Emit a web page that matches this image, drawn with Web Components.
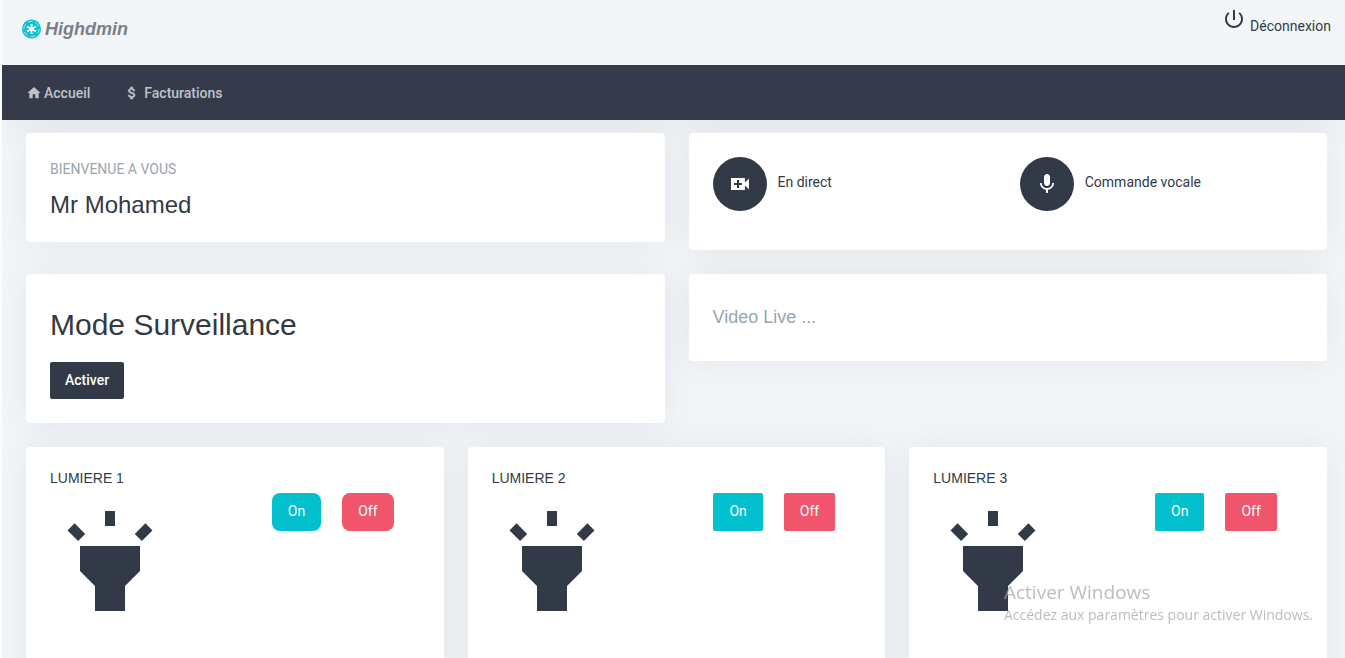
<!DOCTYPE html>
<html lang="fr">
<head>
<meta charset="utf-8">
<meta name="viewport" content="width=device-width, initial-scale=1">
<title>Highdmin</title>
<style>
  body {
    margin: 0;
    border-left: 2px solid #fcfcfc;
    background: #f2f6f9;
    color: #313a46;
    font: 14px/20px Roboto, "Liberation Sans", sans-serif;
    --dark: #313a46;
    --heading: "Liberation Sans", Arial, sans-serif;
    --shadow: 0 0 35px 0 rgba(73, 80, 87, 0.09);
  }
  main {
    display: grid;
    gap: 24px;
    padding: 13px 18px 24px 24px;
  }
</style>
</head>
<body>
<top-bar></top-bar>
<nav-bar>
  <nav-item icon="home">Accueil</nav-item>
  <nav-item icon="dollar" wide>Facturations</nav-item>
</nav-bar>
<main>
  <card-row cols="2">
    <welcome-card name="Mr Mohamed">BIENVENUE A VOUS</welcome-card>
    <action-card>
      <round-action icon="video">En direct</round-action>
      <round-action icon="mic">Commande vocale</round-action>
    </action-card>
  </card-row>
  <card-row cols="2">
    <mode-card>Mode Surveillance</mode-card>
    <video-card>Video Live ...</video-card>
  </card-row>
  <card-row cols="3">
    <light-card rounded>LUMIERE 1</light-card>
    <light-card>LUMIERE 2</light-card>
    <light-card>LUMIERE 3</light-card>
  </card-row>
</main>
<activation-notice></activation-notice>

<script>
/* ---------- icons ---------- */
const icons = {
  home: "M10 20v-6h4v6h5v-8h3L12 3 2 12h3v8z",
  dollar: "M11.8 10.9c-2.27-.59-3-1.2-3-2.15 0-1.09 1.01-1.85 2.7-1.85 1.78 0 2.44.85 2.5 2.1h2.21c-.07-1.72-1.12-3.3-3.21-3.81V3h-3v2.16c-1.94.42-3.5 1.68-3.5 3.61 0 2.31 1.91 3.46 4.7 4.13 2.5.6 3 1.48 3 2.41 0 .69-.49 1.79-2.7 1.79-2.06 0-2.87-.92-2.98-2.1h-2.2c.12 2.19 1.76 3.42 3.68 3.83V21h3v-2.15c1.95-.37 3.5-1.5 3.5-3.55 0-2.84-2.43-3.81-4.7-4.4z",
  power: "M13 3h-2v10h2V3zm4.83 2.17l-1.42 1.42C17.99 7.86 19 9.81 19 12c0 3.87-3.13 7-7 7s-7-3.13-7-7c0-2.19 1.01-4.14 2.58-5.42L6.17 5.17C4.23 6.82 3 9.26 3 12c0 4.97 4.03 9 9 9s9-4.03 9-9c0-2.74-1.23-5.18-3.17-6.83z",
  video: "M17 10.5V6H3v12h14v-4.500l4 4v-11l-4 4zM14 13h-3v3H9v-3H6v-2h3V8h2v3h3v2z",
  mic: "M12 14c1.660 0 3-1.340 3-3V5c0-1.660-1.340-3-3-3S9 3.340 9 5v6c0 1.660 1.340 3 3 3zm5.300-3c0 3-2.540 5.100-5.300 5.100S6.700 14 6.700 11H5c0 3.410 2.720 6.230 6 6.720V21h2v-3.280c3.280-.48 6-3.300 6-6.720h-1.700z",
  torch: "M6 14l3 3v5h6v-5l3-3V9H6zm5-12h2v3h-2zM3.500 5.875L4.914 4.460l2.120 2.122L5.620 7.997zm13.460.710l2.123-2.120 1.414 1.414L18.375 8z"
};

function icon(name, size) {
  return `<svg class="${name}" width="${size}" height="${size}" viewBox="0 0 24 24" fill="currentColor" aria-hidden="true"><path d="${icons[name]}"/></svg>`;
}

/* shared by every card */
const cardStyle = `
  :host {
    display: block;
    box-sizing: border-box;
    padding: 24px;
    border-radius: 4px;
    background: #fff;
    box-shadow: var(--shadow);
  }
`;

const buttonStyle = `
  button {
    padding: 8px 15px 10px;
    border: 0;
    border-radius: 2px;
    background: var(--dark);
    color: #fff;
    font: 500 14px/20px Roboto, sans-serif;
    cursor: pointer;
  }
`;

/* ---------- header ---------- */
class TopBar extends HTMLElement {
  constructor() {
    super();
    const root = this.attachShadow({ mode: "open" });
    root.innerHTML = `
      <style>
        /* above the nav, so that its shadow only falls on the cards */
        :host {
          display: flex;
          position: relative;
          justify-content: space-between;
          align-items: flex-start;
          box-sizing: border-box;
          height: 65px;
          padding: 7px 14px 0 20px;
          background: #f2f6f9;
        }
        a { color: inherit; text-decoration: none; }
        .logo {
          display: flex;
          align-items: center;
          gap: 4px;
          padding-top: 10px;
          color: #7b7f88;
          font: italic bold 18px/24px var(--heading);
        }
        .logout { display: flex; align-items: baseline; gap: 4px; }
      </style>
      <a class="logo" href="#">${this.buildLogo()}<span>Highdmin</span></a>
      <a class="logout" href="#">${icon("power", 24)}<span>Déconnexion</span></a>
    `;
  }

  // disc with a broken inner ring and a six-spoke star
  buildLogo() {
    let spokes = "";
    for (let i = 0; i < 6; i++) {
      spokes += `<path d="M10 10L8.600 4.800h2.800z" transform="rotate(${i * 60} 10 10)"/>`;
    }
    return `<svg width="19" height="20" viewBox="0 0 20 20" aria-hidden="true">
      <circle cx="10" cy="10" r="10" fill="#0fc0d0"/>
      <circle cx="10" cy="10" r="8" fill="none" stroke="#b5ecf1" stroke-width="1" stroke-dasharray="5 3.380"/>
      <g fill="#fff"><circle cx="10" cy="10" r="2.600"/>${spokes}</g>
    </svg>`;
  }
}
customElements.define("top-bar", TopBar);

/* ---------- navigation ---------- */
class NavBar extends HTMLElement {
  constructor() {
    super();
    const root = this.attachShadow({ mode: "open" });
    root.innerHTML = `
      <style>
        :host { display: block; background: #353b4b; box-shadow: var(--shadow); }
        nav {
          display: flex;
          align-items: center;
          gap: 34px;
          height: 55px;
          padding: 0 24px;
        }
      </style>
      <nav><slot></slot></nav>
    `;
  }
}
customElements.define("nav-bar", NavBar);

class NavItem extends HTMLElement {
  constructor() {
    super();
    const root = this.attachShadow({ mode: "open" });
    root.innerHTML = `
      <style>
        :host { display: block; }
        a {
          display: flex;
          align-items: center;
          gap: 2px;
          color: #c0c3c9;
          font-weight: 500;
          text-decoration: none;
        }
        :host([wide]) a { gap: 4px; }
        .dollar { stroke: currentColor; stroke-width: 1; }
      </style>
      <a href="#">${icon(this.getAttribute("icon"), 16)}<span><slot></slot></span></a>
    `;
  }
}
customElements.define("nav-item", NavItem);

/* ---------- grid ---------- */
class CardRow extends HTMLElement {
  constructor() {
    super();
    const root = this.attachShadow({ mode: "open" });
    root.innerHTML = `
      <style>
        :host {
          display: grid;
          grid-template-columns: repeat(${this.getAttribute("cols")}, 1fr);
          align-items: start;
          gap: 24px;
        }
      </style>
      <slot></slot>
    `;
  }
}
customElements.define("card-row", CardRow);

/* ---------- cards ---------- */
class WelcomeCard extends HTMLElement {
  constructor() {
    super();
    const root = this.attachShadow({ mode: "open" });
    root.innerHTML = `
      <style>
        ${cardStyle}
        :host { padding-bottom: 22px; }
        p { margin: 0; padding: 2px 0 10px; color: #98a6ad; }
        h2 { margin: 0; color: #343a40; font: 24px/31px var(--heading); }
      </style>
      <p><slot></slot></p>
      <h2>${this.getAttribute("name")}</h2>
    `;
  }
}
customElements.define("welcome-card", WelcomeCard);

class ActionCard extends HTMLElement {
  constructor() {
    super();
    const root = this.attachShadow({ mode: "open" });
    root.innerHTML = `
      <style>
        ${cardStyle}
        :host {
          display: grid;
          grid-template-columns: 1fr 1fr;
          gap: 24px;
          padding-bottom: 39px;
        }
      </style>
      <slot></slot>
    `;
  }
}
customElements.define("action-card", ActionCard);

class RoundAction extends HTMLElement {
  constructor() {
    super();
    const root = this.attachShadow({ mode: "open" });
    root.innerHTML = `
      <style>
        ${buttonStyle}
        :host { display: flex; align-items: center; gap: 11px; }
        button {
          display: grid;
          place-items: center;
          width: 54px;
          height: 54px;
          padding: 0;
          border-radius: 50%;
        }
        label { padding-bottom: 4px; }
      </style>
      <button id="action" type="button">${icon(this.getAttribute("icon"), 24)}</button>
      <label for="action"><slot></slot></label>
    `;
  }
}
customElements.define("round-action", RoundAction);

class ModeCard extends HTMLElement {
  constructor() {
    super();
    const root = this.attachShadow({ mode: "open" });
    root.innerHTML = `
      <style>
        ${cardStyle}
        ${buttonStyle}
        h1 { margin: 0; padding: 8px 0 18px; color: #343a40; font: 30px/38px var(--heading); }
        button { display: block; padding-bottom: 9px; }
      </style>
      <h1><slot></slot></h1>
      <button type="button">Activer</button>
    `;
  }
}
customElements.define("mode-card", ModeCard);

class VideoCard extends HTMLElement {
  constructor() {
    super();
    const root = this.attachShadow({ mode: "open" });
    root.innerHTML = `
      <style>
        ${cardStyle}
        h4 { margin: 0; padding: 8px 0; color: #98a6ad; font: 18px/23px var(--heading); }
      </style>
      <h4><slot></slot></h4>
    `;
  }
}
customElements.define("video-card", VideoCard);

class LightCard extends HTMLElement {
  constructor() {
    super();
    const root = this.attachShadow({ mode: "open" });
    root.innerHTML = `
      <style>
        ${cardStyle}
        ${buttonStyle}
        :host { min-height: 240px; padding-top: 22px; }
        h5 { margin: 0; padding-bottom: 6px; font: 14px/18px var(--heading); }
        .content { display: grid; grid-template-columns: 3fr 2fr; }
        .content svg { display: block; margin-top: 8px; }
        .buttons { display: flex; align-items: flex-start; gap: 21px; }
        button { padding-left: 16px; padding-right: 16px; font-weight: 400; }
        .on { background: #02c0ce; }
        .off { background: #f1556c; }
        :host([rounded]) button { border-radius: 8px; }
      </style>
      <h5><slot></slot></h5>
      <div class="content">
        ${icon("torch", 120)}
        <div class="buttons">
          <button class="on" type="button">On</button>
          <button class="off" type="button">Off</button>
        </div>
      </div>
    `;
  }
}
customElements.define("light-card", LightCard);

/* ---------- notice over the page ---------- */
class ActivationNotice extends HTMLElement {
  constructor() {
    super();
    const root = this.attachShadow({ mode: "open" });
    root.innerHTML = `
      <style>
        :host {
          position: fixed;
          right: 32px;
          bottom: 33px;
          color: rgba(165, 165, 165, 0.75);
          font-family: "Open Sans", "Noto Sans", sans-serif;
          pointer-events: none;
        }
        p { margin: 0; font-size: 14px; line-height: 20px; }
        .title { font-size: 19px; line-height: 26px; }
      </style>
      <p class="title">Activer Windows</p>
      <p>Accédez aux paramètres pour activer Windows.</p>
    `;
  }
}
customElements.define("activation-notice", ActivationNotice);
</script>
</body>
</html>
